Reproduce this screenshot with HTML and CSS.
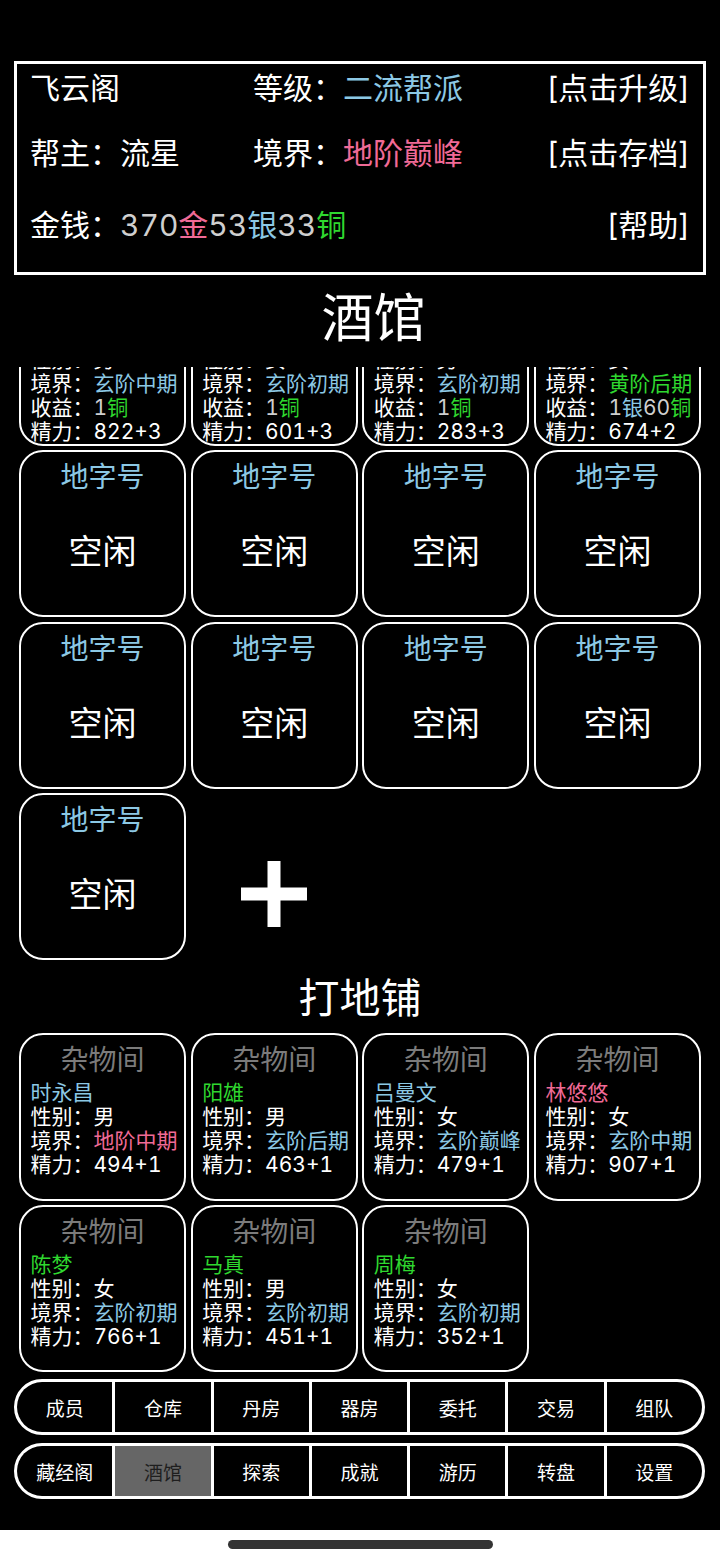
FILE: index.html
```html
<!DOCTYPE html>
<html lang="zh-CN">
<head>
<meta charset="utf-8">
<title>酒馆</title>
<link rel="stylesheet" href="styles.css">
</head>
<body>
<div class="screen">
  <div class="header">
    <div class="hrow">
      <span>飞云阁</span>
      <span>等级：<span class="blue">二流帮派</span></span>
      <span class="act">[点击升级]</span>
    </div>
    <div class="hrow">
      <span>帮主：流星</span>
      <span>境界：<span class="pink">地阶巅峰</span></span>
      <span class="act">[点击存档]</span>
    </div>
    <div class="hrow money">
      <span class="span2">金钱：<span class="gray">370</span><span class="pink">金</span><span class="gray">53</span><span class="blue">银</span><span class="gray">33</span><span class="green">铜</span></span>
      <span class="act">[帮助]</span>
    </div>
  </div>

  <div class="title">酒馆</div>

  <div class="viewport">
    <div class="scroll">
      <div class="grid">
        <div class="card info">
          <div class="ttl blue">天字号</div>
          <div class="ln green">李青</div>
          <div class="ln">性别：男</div>
          <div class="ln">境界：<span class="blue">玄阶中期</span></div>
          <div class="ln">收益：<span class="gray">1</span><span class="green">铜</span></div>
          <div class="ln">精力：822+3</div>
        </div>
        <div class="card info">
          <div class="ttl blue">天字号</div>
          <div class="ln blue">苏婉</div>
          <div class="ln">性别：女</div>
          <div class="ln">境界：<span class="blue">玄阶初期</span></div>
          <div class="ln">收益：<span class="gray">1</span><span class="green">铜</span></div>
          <div class="ln">精力：601+3</div>
        </div>
        <div class="card info">
          <div class="ttl blue">天字号</div>
          <div class="ln green">王虎</div>
          <div class="ln">性别：男</div>
          <div class="ln">境界：<span class="blue">玄阶初期</span></div>
          <div class="ln">收益：<span class="gray">1</span><span class="green">铜</span></div>
          <div class="ln">精力：283+3</div>
        </div>
        <div class="card info">
          <div class="ttl blue">天字号</div>
          <div class="ln pink">柳烟</div>
          <div class="ln">性别：女</div>
          <div class="ln">境界：<span class="green">黄阶后期</span></div>
          <div class="ln">收益：<span class="gray">1</span><span class="blue">银</span><span class="gray">60</span><span class="green">铜</span></div>
          <div class="ln">精力：674+2</div>
        </div>

        <div class="card empty"><div class="rname">地字号</div><div class="idle">空闲</div></div>
        <div class="card empty"><div class="rname">地字号</div><div class="idle">空闲</div></div>
        <div class="card empty"><div class="rname">地字号</div><div class="idle">空闲</div></div>
        <div class="card empty"><div class="rname">地字号</div><div class="idle">空闲</div></div>

        <div class="card empty"><div class="rname">地字号</div><div class="idle">空闲</div></div>
        <div class="card empty"><div class="rname">地字号</div><div class="idle">空闲</div></div>
        <div class="card empty"><div class="rname">地字号</div><div class="idle">空闲</div></div>
        <div class="card empty"><div class="rname">地字号</div><div class="idle">空闲</div></div>

        <div class="card empty"><div class="rname">地字号</div><div class="idle">空闲</div></div>
        <div class="add">
          <svg width="66" height="66" viewBox="0 0 66 66"><rect x="26.5" y="0" width="13" height="66" fill="#fff"/><rect x="0" y="26.5" width="66" height="13" fill="#fff"/></svg>
        </div>
      </div>

      <div class="subtitle">打地铺</div>

      <div class="grid">
        <div class="card info">
          <div class="ttl">杂物间</div>
          <div class="ln blue">时永昌</div>
          <div class="ln">性别：男</div>
          <div class="ln">境界：<span class="pink">地阶中期</span></div>
          <div class="ln">精力：494+1</div>
        </div>
        <div class="card info">
          <div class="ttl">杂物间</div>
          <div class="ln green">阳雄</div>
          <div class="ln">性别：男</div>
          <div class="ln">境界：<span class="blue">玄阶后期</span></div>
          <div class="ln">精力：463+1</div>
        </div>
        <div class="card info">
          <div class="ttl">杂物间</div>
          <div class="ln blue">吕曼文</div>
          <div class="ln">性别：女</div>
          <div class="ln">境界：<span class="blue">玄阶巅峰</span></div>
          <div class="ln">精力：479+1</div>
        </div>
        <div class="card info">
          <div class="ttl">杂物间</div>
          <div class="ln pink">林悠悠</div>
          <div class="ln">性别：女</div>
          <div class="ln">境界：<span class="blue">玄阶中期</span></div>
          <div class="ln">精力：907+1</div>
        </div>
        <div class="card info">
          <div class="ttl">杂物间</div>
          <div class="ln green">陈梦</div>
          <div class="ln">性别：女</div>
          <div class="ln">境界：<span class="blue">玄阶初期</span></div>
          <div class="ln">精力：766+1</div>
        </div>
        <div class="card info">
          <div class="ttl">杂物间</div>
          <div class="ln green">马真</div>
          <div class="ln">性别：男</div>
          <div class="ln">境界：<span class="blue">玄阶初期</span></div>
          <div class="ln">精力：451+1</div>
        </div>
        <div class="card info">
          <div class="ttl">杂物间</div>
          <div class="ln green">周梅</div>
          <div class="ln">性别：女</div>
          <div class="ln">境界：<span class="blue">玄阶初期</span></div>
          <div class="ln">精力：352+1</div>
        </div>
      </div>
    </div>
  </div>

  <div class="nav first">
    <div class="cell">成员</div>
    <div class="cell">仓库</div>
    <div class="cell">丹房</div>
    <div class="cell">器房</div>
    <div class="cell">委托</div>
    <div class="cell">交易</div>
    <div class="cell">组队</div>
  </div>
  <div class="nav second">
    <div class="cell">藏经阁</div>
    <div class="cell active">酒馆</div>
    <div class="cell">探索</div>
    <div class="cell">成就</div>
    <div class="cell">游历</div>
    <div class="cell">转盘</div>
    <div class="cell">设置</div>
  </div>

  <div class="spacer"></div>
  <div class="homebar"><div class="pill"></div></div>
</div>
</body>
</html>
```

FILE: styles.css
```css
* { box-sizing: border-box; }

html, body {
  margin: 0;
  padding: 0;
  background: #000;
}

body {
  font-family: Inter, "Noto Sans CJK SC", "Noto Sans", sans-serif;
  font-variant-numeric: tabular-nums;
  color: #fff;
}

.screen {
  width: 720px;
  height: 1560px;
  overflow: hidden;
  background: #000;
  display: flex;
  flex-direction: column;
}

.blue { color: #8cc8e4; }
.pink { color: #f06a96; }
.green { color: #2fd82f; }
.gray { color: #cfcfcf; }

/* header */
.header {
  margin: 61px 14px 0 14px;
  height: 214px;
  border: 3px solid #fff;
  padding: 4px 13px 0 13px;
}

.hrow {
  display: grid;
  grid-template-columns: 223px 1fr auto;
  height: 40px;
  line-height: 40px;
  font-size: 30px;
  white-space: nowrap;
}

.hrow + .hrow { margin-top: 25px; }
.hrow.money { margin-top: 32px; }
.hrow .span2 { grid-column: 1 / 3; }
.hrow .act { text-align: right; }

/* titles */
.title {
  margin-top: 14px;
  height: 60px;
  line-height: 60px;
  font-size: 52px;
  text-align: center;
  padding-left: 27px;
  font-weight: 400;
}

.viewport {
  margin-top: 18px;
  height: 1010px;
  overflow: hidden;
  flex: none;
}

.scroll {
  margin-top: -91px;
}

.grid {
  display: grid;
  grid-template-columns: repeat(4, minmax(0, 1fr));
  gap: 4.5px;
  padding: 0 19px;
}

.card {
  aspect-ratio: 1 / 1;
  min-width: 0;
  border: 2.5px solid #fff;
  border-radius: 24px;
  background: #000;
}

.card.empty {
  display: flex;
  flex-direction: column;
  align-items: center;
}

.rname {
  margin-top: 5px;
  height: 40px;
  line-height: 40px;
  font-size: 28px;
  color: #8cc8e4;
}

.idle {
  margin-top: 35px;
  height: 40px;
  line-height: 40px;
  font-size: 34px;
  color: #fff;
}

.card.info {
  padding: 3.5px 0 0 9.5px;
  position: relative;
}

.ttl {
  height: 42px;
  line-height: 42px;
  font-size: 28px;
  text-align: center;
  color: #7b7b7b;
  padding-right: 9.5px;
}

.ttl.blue { color: #8cc8e4; }

.ln {
  height: 24px;
  line-height: 24px;
  font-size: 21px;
  white-space: nowrap;
}

.add {
  display: flex;
  align-items: center;
  justify-content: center;
  padding-top: 34px;
}

.add svg { display: block; }

.subtitle {
  height: 73px;
  padding-top: 6px;
  line-height: 65px;
  font-size: 41px;
  text-align: center;
  font-weight: 400;
}

/* nav */
.nav {
  margin: 0 15px 0 14px;
  height: 56px;
  border: 3px solid #fff;
  border-radius: 28px;
  background: #fff;
  overflow: hidden;
  display: flex;
  gap: 3px;
  flex: none;
}

.nav.first { margin-top: 2px; }
.nav.second { margin-top: 8px; }

.cell {
  flex: 1;
  background: #000;
  color: #fff;
  font-size: 19px;
  display: flex;
  align-items: center;
  justify-content: center;
}

.cell.active {
  background: #666;
  color: #1e1e1e;
}

.spacer {
  height: 31px;
  flex: none;
}

.homebar {
  flex: 1;
  background: #fff;
  display: flex;
  justify-content: center;
  padding-top: 10px;
}

.pill {
  width: 265px;
  height: 9px;
  border-radius: 5px;
  background: #333;
}
```
